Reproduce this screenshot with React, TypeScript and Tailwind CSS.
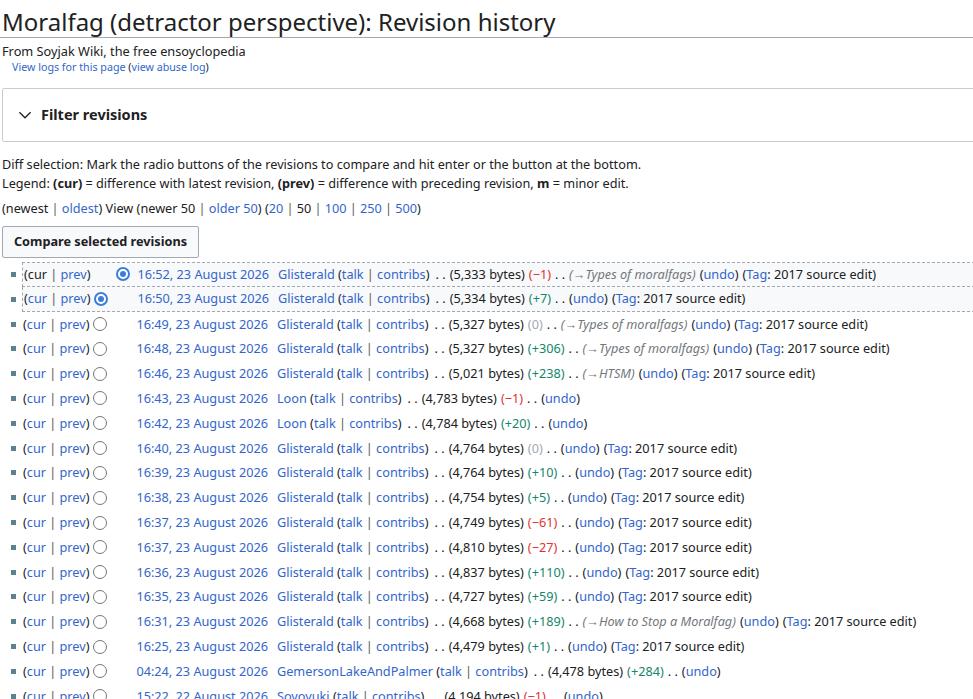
import React from "react";

type Row = {
  time: string;
  user: string;
  bytes: string;
  diff: string;
  kind: "neg" | "pos" | "zero";
  comment?: string;
  tag: boolean;
  radio: "first" | "second" | "none";
};

const rows: Row[] = [
  { time: "16:52, 23 August 2026", user: "Glisterald", bytes: "5,333", diff: "\u22121", kind: "neg", comment: "Types of moralfags", tag: true, radio: "first" },
  { time: "16:50, 23 August 2026", user: "Glisterald", bytes: "5,334", diff: "+7", kind: "pos", tag: true, radio: "second" },
  { time: "16:49, 23 August 2026", user: "Glisterald", bytes: "5,327", diff: "0", kind: "zero", comment: "Types of moralfags", tag: true, radio: "none" },
  { time: "16:48, 23 August 2026", user: "Glisterald", bytes: "5,327", diff: "+306", kind: "pos", comment: "Types of moralfags", tag: true, radio: "none" },
  { time: "16:46, 23 August 2026", user: "Glisterald", bytes: "5,021", diff: "+238", kind: "pos", comment: "HTSM", tag: true, radio: "none" },
  { time: "16:43, 23 August 2026", user: "Loon", bytes: "4,783", diff: "\u22121", kind: "neg", tag: false, radio: "none" },
  { time: "16:42, 23 August 2026", user: "Loon", bytes: "4,784", diff: "+20", kind: "pos", tag: false, radio: "none" },
  { time: "16:40, 23 August 2026", user: "Glisterald", bytes: "4,764", diff: "0", kind: "zero", tag: true, radio: "none" },
  { time: "16:39, 23 August 2026", user: "Glisterald", bytes: "4,764", diff: "+10", kind: "pos", tag: true, radio: "none" },
  { time: "16:38, 23 August 2026", user: "Glisterald", bytes: "4,754", diff: "+5", kind: "pos", tag: true, radio: "none" },
  { time: "16:37, 23 August 2026", user: "Glisterald", bytes: "4,749", diff: "\u221261", kind: "neg", tag: true, radio: "none" },
  { time: "16:37, 23 August 2026", user: "Glisterald", bytes: "4,810", diff: "\u221227", kind: "neg", tag: true, radio: "none" },
  { time: "16:36, 23 August 2026", user: "Glisterald", bytes: "4,837", diff: "+110", kind: "pos", tag: true, radio: "none" },
  { time: "16:35, 23 August 2026", user: "Glisterald", bytes: "4,727", diff: "+59", kind: "pos", tag: true, radio: "none" },
  { time: "16:31, 23 August 2026", user: "Glisterald", bytes: "4,668", diff: "+189", kind: "pos", comment: "How to Stop a Moralfag", tag: true, radio: "none" },
  { time: "16:25, 23 August 2026", user: "Glisterald", bytes: "4,479", diff: "+1", kind: "pos", tag: true, radio: "none" },
  { time: "04:24, 23 August 2026", user: "GemersonLakeAndPalmer", bytes: "4,478", diff: "+284", kind: "pos", tag: false, radio: "none" },
  { time: "15:22, 22 August 2026", user: "Soyoyuki", bytes: "4,194", diff: "\u22121", kind: "neg", tag: false, radio: "none" },
];

const L = ({ children }: { children: React.ReactNode }) => (
  <span className="text-[#3366cc]">{children}</span>
);

const Sep = () => <span className="text-[#54595d] px-[3.25px]">|</span>;

const Radio = ({ checked, hidden }: { checked?: boolean; hidden?: boolean }) => (
  <span
    className={
      "inline-flex w-[14px] h-[14px] rounded-full items-center justify-center box-border " +
      (hidden ? "invisible " : "") +
      (checked ? "border-2 border-[#3b7ddd] bg-white" : "border border-[#767676] bg-white")
    }
  >
    {checked ? <span className="block w-[6px] h-[6px] rounded-full bg-[#3b7ddd]" /> : null}
  </span>
);

function RevRow({ r }: { r: Row }) {
  const selected = r.radio !== "none";
  const diffColor =
    r.kind === "neg" ? "text-[#d33]" : r.kind === "pos" ? "text-[#14866d]" : "text-[#a2a9b1]";
  return (
    <li className="flex items-center h-[24.82px]">
      <span className="w-[22px] flex shrink-0">
        <span className="block w-[5px] h-[5px] bg-[#5f808e] ml-[11px]" />
      </span>
      <div
        className={
          "flex-1 flex items-center h-full whitespace-nowrap pl-[1px] " +
          (selected ? "bg-[#f8f9fa] border-l border-dashed border-[#a2a9b1] " : "") +
          (r.radio === "first" ? "border-t border-b " : "") +
          (r.radio === "second" ? "border-b " : "")
        }
      >
        <span>
          (
          {r.radio === "first" ? <span>cur</span> : <L>cur</L>}
          <Sep />
          <L>prev</L>)
        </span>
        <span className="ml-[4px] inline-flex">
          <Radio checked={r.radio === "second"} hidden={r.radio === "first"} />
        </span>
        <span className="ml-[8px] inline-flex">
          <Radio checked={r.radio === "first"} hidden={r.radio !== "first"} />
        </span>
        <span className="ml-[7px]">
          <L>{r.time}</L>
        </span>
        <span className="ml-[9px]">
          <L>{r.user}</L> (<L>talk</L>
          <Sep />
          <L>contribs</L>)
        </span>
        <span className="ml-[6px]">. .</span>
        <span className="ml-[4px]">({r.bytes} bytes)</span>
        <span className={"ml-[4px] " + diffColor}>({r.diff})</span>
        <span className="ml-[4px]">. .</span>
        {r.comment ? (
          <span className="ml-[4px] italic text-[#72777d]">
            (→{r.comment})
          </span>
        ) : null}
        <span className="ml-[4px]">
          (<L>undo</L>)
        </span>
        {r.tag ? (
          <span className="ml-[4px]">
            (<L>Tag</L>: 2017 source edit)
          </span>
        ) : null}
      </div>
    </li>
  );
}

export default function App() {
  return (
    <div
      className="w-[973px] h-[699px] overflow-hidden bg-white text-[#202122]"
      style={{ fontFamily: "'Noto Sans', sans-serif" }}
    >
      <div className="w-[1000px]">
        <h1 className="text-[24px] leading-[31px] pl-[2px] pt-[6px] border-b border-[#a2a9b1] font-normal">
          Moralfag (detractor perspective): Revision history
        </h1>
        <div className="pl-[2px] text-[12.75px] leading-[20px] mt-[3px]">
          From Soyjak Wiki, the free ensoyclopedia
        </div>
        <div className="pl-[12px] text-[10.7px] leading-[12px] text-[#3366cc]">
          View logs for this page <span className="text-[#202122]">(</span>view abuse log
          <span className="text-[#202122]">)</span>
        </div>
        <div className="ml-[2px] mt-[15px] h-[54px] border border-[#c8ccd1] rounded-[2px] flex items-center pl-[15px]">
          <svg width="14" height="14" viewBox="0 0 20 20" className="mr-[9px]">
            <path d="M2 6l8 8 8-8" fill="none" stroke="#202122" strokeWidth="1.8" />
          </svg>
          <span className="font-bold text-[14.5px]">Filter revisions</span>
        </div>
        <div className="pl-[2px] mt-[13px] text-[12.7px] leading-[19px]">
          Diff selection: Mark the radio buttons of the revisions to compare and hit enter or the button at the bottom.
        </div>
        <div className="pl-[2px] text-[12.7px] leading-[19px]">
          Legend: <b>(cur)</b> = difference with latest revision, <b>(prev)</b> = difference with preceding revision,{" "}
          <b>m</b> = minor edit.
        </div>
        <div className="pl-[2px] mt-[6px] text-[12.7px] leading-[19px]">
          (newest<Sep />
          <L>oldest</L>) View (newer 50<Sep />
          <L>older 50</L>) (<L>20</L>
          <Sep />
          50
          <Sep />
          <L>100</L>
          <Sep />
          <L>250</L>
          <Sep />
          <L>500</L>)
        </div>
        <button className="ml-[2px] mt-[8px] h-[32px] w-[197px] border border-[#a2a9b1] rounded-[2px] bg-[#f8f9fa] font-bold text-[12.7px] text-[#202122]">
          Compare selected revisions
        </button>
        <ul className="mt-[4px] text-[12.7px]">
          {rows.map((r, i) => (
            <RevRow key={i} r={r} />
          ))}
        </ul>
      </div>
    </div>
  );
}
